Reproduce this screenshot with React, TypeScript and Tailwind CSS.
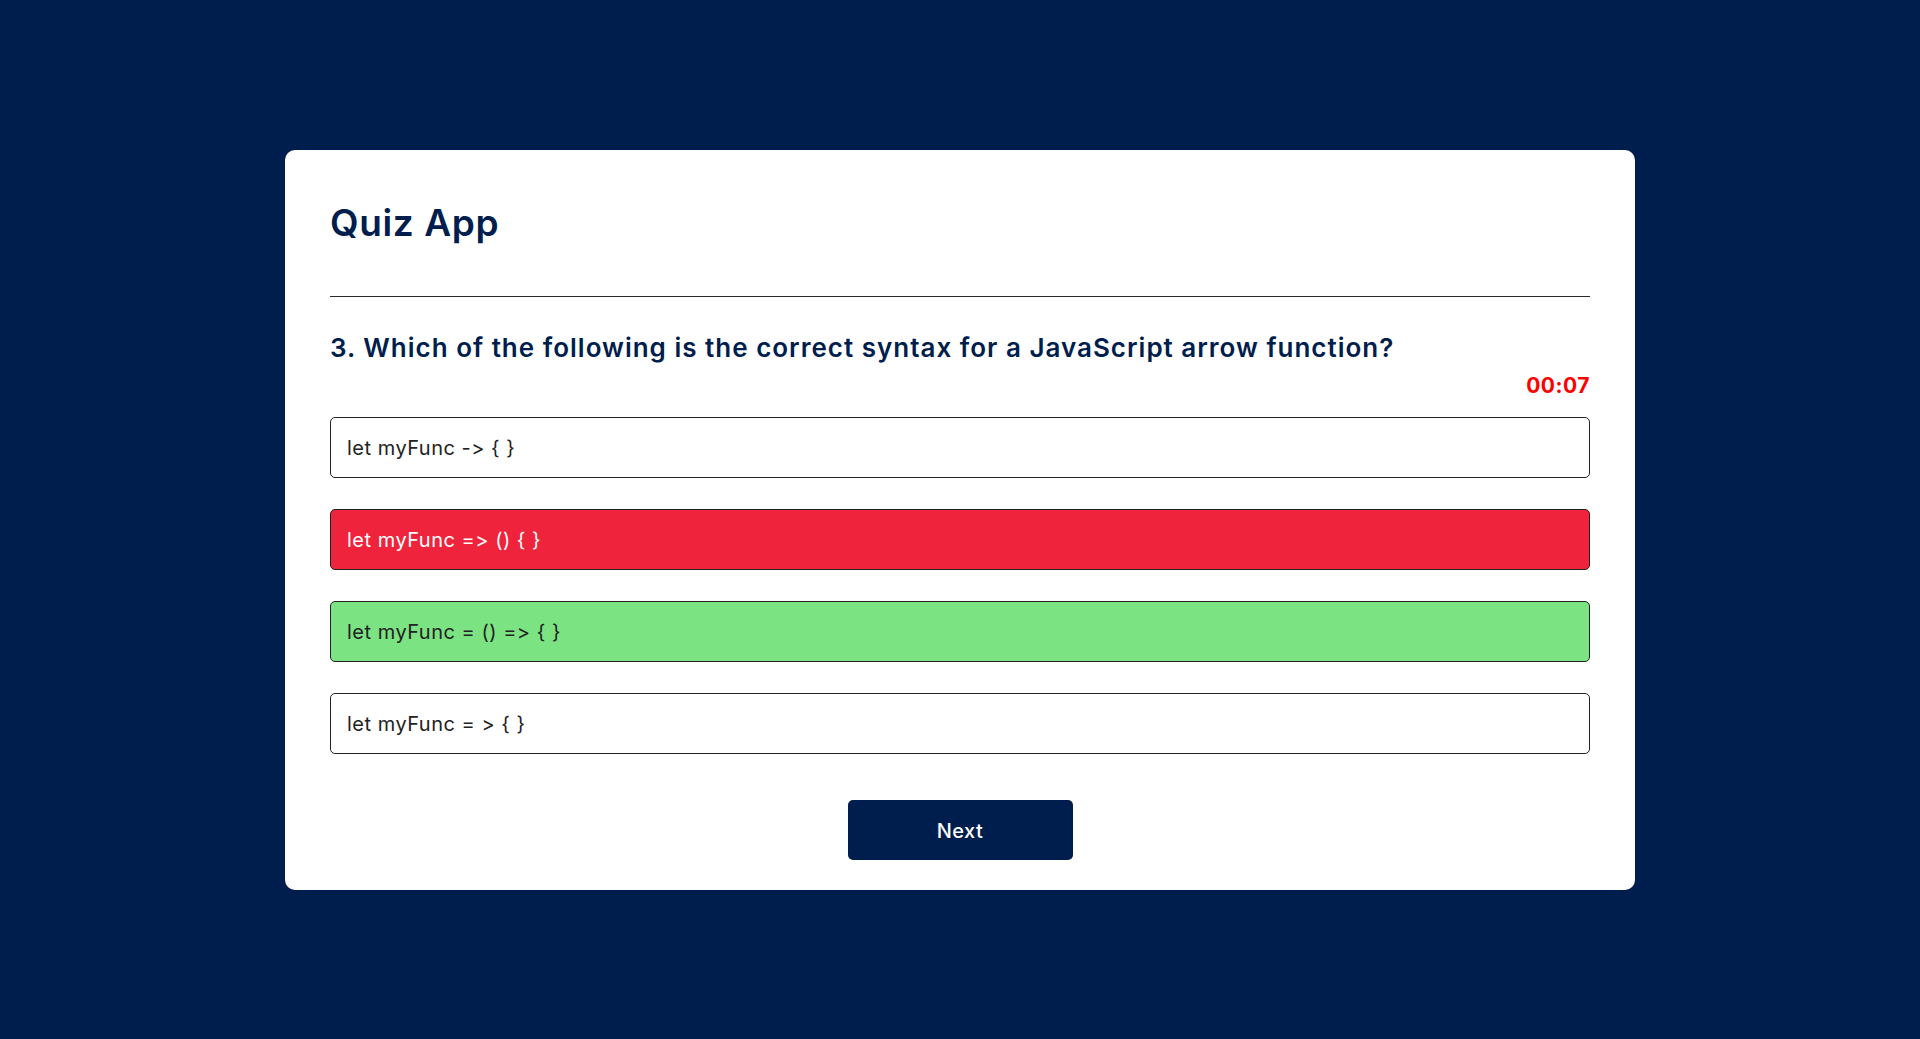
import React from "react";

const options = [
  { text: "let myFunc -> { }", state: "none" },
  { text: "let myFunc => () { }", state: "wrong" },
  { text: "let myFunc = () => { }", state: "right" },
  { text: "let myFunc = > { }", state: "none" },
];

export default function App() {
  return (
    <div
      className="min-h-[1039px] w-full bg-[#001e4d] flex items-center justify-center [font-feature-settings:'calt'_0,'liga'_0]"
      style={{ fontFamily: "Inter, 'Open Sans', sans-serif" }}
    >
      <div className="w-[1350px] bg-white rounded-[10px] px-[45px] pb-[30px]">
        <div className="pt-[47px] pb-[49px] border-b border-[#2a2a2a]">
          <h1 className="h-[50px] leading-[52px] text-[37px] font-semibold text-[#001e4d] tracking-[0.6px]">
            Quiz App
          </h1>
        </div>
        <h2 className="mt-[32px] h-[36px] leading-[38px] text-[26px] font-semibold text-[#001e4d] tracking-[1px]">
          3. Which of the following is the correct syntax for a JavaScript arrow function?
        </h2>
        <div className="mt-[8px] h-[24px] leading-[26px] text-right text-[21px] font-bold text-[#ff0000] tracking-[0.5px]">
          00:07
        </div>
        <div className="mt-[20px] flex flex-col gap-[31px]">
          {options.map((o, i) => (
            <div
              key={i}
              className={
                o.state === "wrong"
                  ? "h-[61px] flex items-center pl-[16px] pt-[2px] rounded-[5px] border border-[#222222] bg-[#ef233c] text-white text-[20px] tracking-[0.5px]"
                  : o.state === "right"
                  ? "h-[61px] flex items-center pl-[16px] pt-[2px] rounded-[5px] border border-[#222222] bg-[#7be382] text-[#222222] text-[20px] tracking-[0.5px]"
                  : "h-[61px] flex items-center pl-[16px] pt-[2px] rounded-[5px] border border-[#222222] bg-white text-[#222222] text-[20px] tracking-[0.5px]"
              }
            >
              {o.text}
            </div>
          ))}
        </div>
        <div className="mt-[46px] flex justify-center">
          <button className="w-[225px] h-[60px] pt-[3px] rounded-[5px] bg-[#001e4d] text-white text-[20px] font-medium tracking-[0.5px]">
            Next
          </button>
        </div>
      </div>
    </div>
  );
}
